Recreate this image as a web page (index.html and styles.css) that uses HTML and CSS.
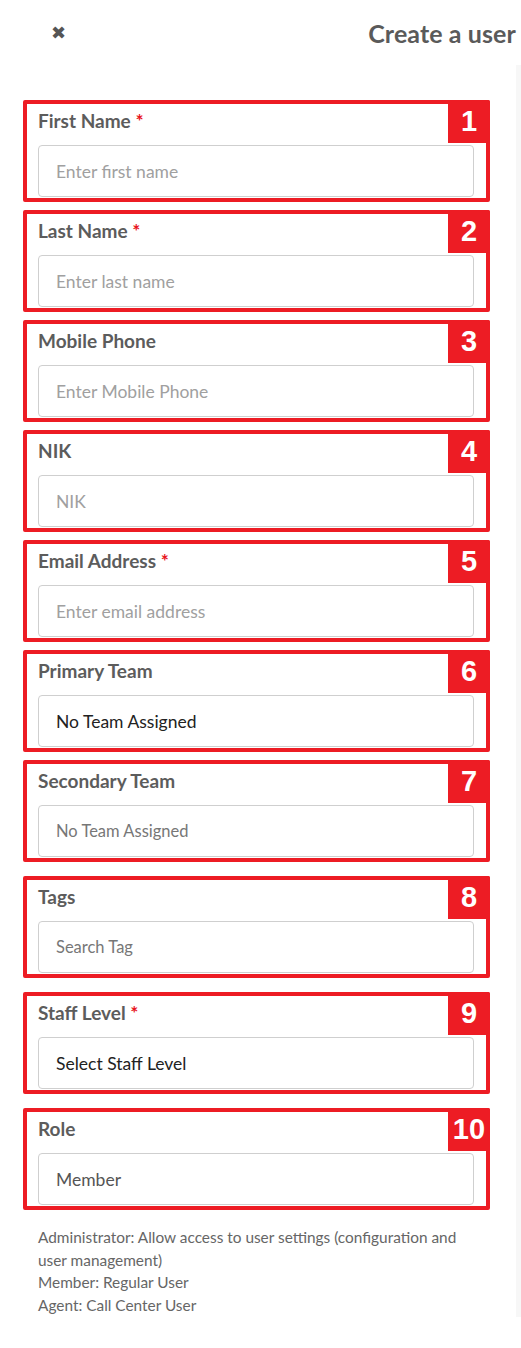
FILE: index.html
```html
<!DOCTYPE html>
<html lang="en">
<head>
  <meta charset="utf-8">
  <title>Create a user</title>
  <link rel="stylesheet" href="styles.css">
</head>
<body>
  <header class="top">
    <span class="close">&#10006;</span>
    <h1>Create a user</h1>
  </header>

  <div class="page">
    <form class="form">
      <!-- 1 -->
      <div class="field">
        <label>First Name <span class="req">*</span></label>
        <input type="text" placeholder="Enter first name">
        <span class="badge">1</span>
      </div>

      <!-- 2 -->
      <div class="field">
        <label>Last Name <span class="req">*</span></label>
        <input type="text" placeholder="Enter last name">
        <span class="badge">2</span>
      </div>

      <!-- 3 -->
      <div class="field">
        <label>Mobile Phone</label>
        <input type="text" placeholder="Enter Mobile Phone">
        <span class="badge">3</span>
      </div>

      <!-- 4 -->
      <div class="field">
        <label>NIK</label>
        <input type="text" placeholder="NIK">
        <span class="badge">4</span>
      </div>

      <!-- 5 -->
      <div class="field">
        <label>Email Address <span class="req">*</span></label>
        <input type="text" placeholder="Enter email address">
        <span class="badge">5</span>
      </div>

      <!-- 6 -->
      <div class="field">
        <label>Primary Team</label>
        <input type="text" class="dark" value="No Team Assigned">
        <span class="badge">6</span>
      </div>

      <!-- 7 -->
      <div class="field">
        <label>Secondary Team</label>
        <input type="text" class="small" placeholder="No Team Assigned">
        <span class="badge">7</span>
      </div>

      <!-- 8 -->
      <div class="field wide-gap">
        <label>Tags</label>
        <input type="text" class="small" placeholder="Search Tag">
        <span class="badge">8</span>
      </div>

      <!-- 9 -->
      <div class="field wide-gap">
        <label>Staff Level <span class="req">*</span></label>
        <input type="text" class="dark" value="Select Staff Level">
        <span class="badge">9</span>
      </div>

      <!-- 10 -->
      <div class="field wide-gap">
        <label>Role</label>
        <input type="text" class="mid" value="Member">
        <span class="badge">10</span>
      </div>

      <p class="help">
        Administrator: Allow access to user settings (configuration and user management)<br>
        Member: Regular User<br>
        Agent: Call Center User
      </p>
    </form>
    <div class="track"></div>
  </div>
</body>
</html>
```

FILE: styles.css
```css
:root{
  --red:#ed1c24;
  --text:#5c5c5c;
}
body{
  margin:0;
  background:#fff;
  font-family:"Lato","Open Sans",sans-serif;
  color:var(--text);
}
.top{
  height:65px;
  display:flex;
  align-items:center;
  justify-content:space-between;
  padding:0 5px 0 51px;
}
.close{font-size:18px;color:#555;margin-top:-2px;}
.top h1{margin:0;font-size:25px;font-weight:700;color:#5a5a5a;letter-spacing:.1px;}

.page{display:flex;}
.form{flex:1;padding:35px 0 0 23px;display:flex;flex-direction:column;gap:8px;}
.track{width:5px;background:#f7f7f7;}

.field{
  position:relative;
  width:436px;
  border:4px solid var(--red);
  border-radius:2px;
  padding:5px 12px 1px 11px;
  display:flex;
  flex-direction:column;
}
.field.wide-gap{margin-top:6px;}
label{font-size:19px;line-height:24px;font-weight:700;color:var(--text);margin-bottom:12px;}
.req{color:#e8141b;}
input{
  height:52px;
  box-sizing:border-box;
  border:1px solid #cfcfcf;
  border-radius:4px;
  padding:0 17px;
  font-family:inherit;
  font-size:17.5px;
  color:#333;
}
input::placeholder{color:#a0a0a0;}
input.dark{color:#222;}
input.small{font-size:16.5px;}
input.small::placeholder{color:#777;}
input.mid{color:#555;}
.badge{
  position:absolute;
  top:-4px;
  right:-4px;
  width:42px;
  height:43px;
  background:var(--red);
  border-radius:0 2px 0 0;
  color:#fff;
  font-family:"Liberation Sans",Arial,sans-serif;
  font-weight:700;
  font-size:29px;
  display:flex;
  align-items:center;
  justify-content:center;
}
.help{margin:8px 0 0 15px;width:440px;font-size:15.4px;line-height:22.7px;color:#666;}
```
